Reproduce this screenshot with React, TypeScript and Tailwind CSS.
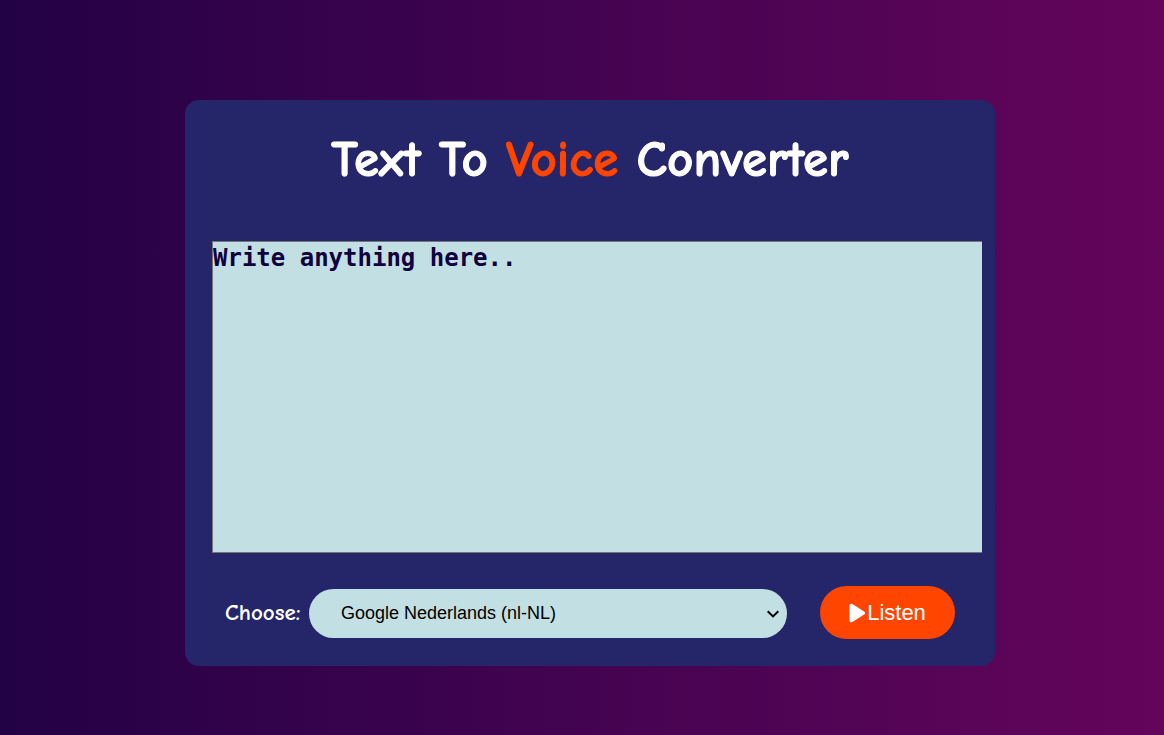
import { useState } from "react";

const voices = ["Google Nederlands (nl-NL)", "Google US English (en-US)", "Google UK English Female (en-GB)", "Google Deutsch (de-DE)"];

export default function App() {
  const [text, setText] = useState("");
  const [voice, setVoice] = useState(voices[0]);

  const listen = () => {
    const utterance = new SpeechSynthesisUtterance(text);
    utterance.voice = window.speechSynthesis.getVoices().find((v) => voice.startsWith(v.name)) ?? null;
    window.speechSynthesis.speak(utterance);
  };

  return (
    <main className="flex min-h-screen items-center justify-center bg-linear-to-r/srgb from-[#230145] to-[#64055b] pt-[31px] pl-4">
      <section className="w-full max-w-[810px] rounded-[14px] bg-[#25256a] pt-7 pr-[13px] pb-[27px] pl-[27px]">
        <h1 className="mr-[14px] text-center font-['Comic_Sans_MS','Comic_Neue','Open_Sans',sans-serif] text-[51px] leading-[64px] font-bold text-white [-webkit-text-stroke:1px]">
          Text To <span className="text-[#ff4500]">Voice</span> Converter
        </h1>
        <textarea
          aria-label="Text to read aloud"
          placeholder="Write anything here.."
          value={text}
          onChange={(e) => setText(e.target.value)}
          className="mt-[49px] block h-[312px] w-full resize-none border-y border-l border-[#767676] bg-[#c2dfe3] font-['DejaVu_Sans_Mono',monospace] text-2xl leading-8 font-bold text-[#10003d] outline-none placeholder:text-[#10003d]"
        />
        <div className="mt-[33px] mr-[27px] ml-[13px] flex items-center">
          <label htmlFor="voice" className="w-[84px] shrink-0 font-['Comic_Sans_MS','Comic_Neue','Open_Sans',sans-serif] text-[23px] leading-8 font-bold text-white">
            Choose:
          </label>
          <div className="relative mt-px min-w-0 flex-1">
            <select
              id="voice"
              value={voice}
              onChange={(e) => setVoice(e.target.value)}
              className="h-[49px] w-full appearance-none rounded-full bg-[#c2dfe3] px-8 font-['Liberation_Sans',sans-serif] text-lg text-black"
            >
              {voices.map((v) => (
                <option key={v}>{v}</option>
              ))}
            </select>
            <svg viewBox="0 0 12 8" className="pointer-events-none absolute top-[21px] right-2 h-2 w-3" fill="none" stroke="black" strokeWidth="2">
              <path d="M0.7 1.2 6 6.4 11.3 1.2" />
            </svg>
          </div>
          <button
            type="button"
            onClick={listen}
            className="ml-[33px] flex h-[53px] w-[135px] shrink-0 items-center justify-center rounded-full bg-[#ff4500] font-['Liberation_Sans',sans-serif] text-[22px] text-white"
          >
            <svg viewBox="0 0 18 20" className="h-5 w-[18px]" fill="currentColor">
              <path d="M0.5 2.6C0.5 1.1 2.1 .3 3.4 1.1L15.2 8.4C16.5 9.2 16.5 10.8 15.2 11.6L3.4 18.9C2.1 19.7 0.5 18.9 0.5 17.4Z" />
            </svg>
            Listen
          </button>
        </div>
      </section>
    </main>
  );
}
